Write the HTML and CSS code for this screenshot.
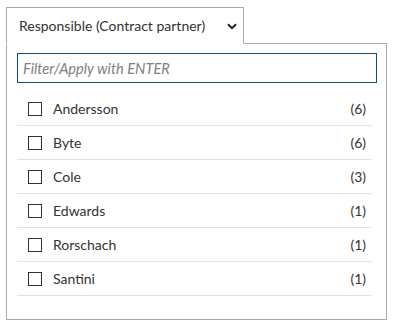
FILE: index.html
```html
<!DOCTYPE html>
<html>
<head>
<meta charset="utf-8">
<link rel="stylesheet" href="styles.css">
</head>
<body>
<div class="wrap">
  <div class="tab">
    <span class="tab-label">Responsible (Contract partner)</span>
    <svg class="chev" width="10" height="7" viewBox="0 0 10 7"><path d="M1 1.2 L5 5.2 L9 1.2" fill="none" stroke="#222" stroke-width="2"/></svg>
  </div>
  <div class="panel">
    <div class="filter"><span class="ph">Filter/Apply with ENTER</span></div>
    <ul class="list">
      <li class="row"><span class="cb"></span><span class="name">Andersson</span><span class="count">(6)</span></li>
      <li class="row"><span class="cb"></span><span class="name">Byte</span><span class="count">(6)</span></li>
      <li class="row"><span class="cb"></span><span class="name">Cole</span><span class="count">(3)</span></li>
      <li class="row"><span class="cb"></span><span class="name">Edwards</span><span class="count">(1)</span></li>
      <li class="row"><span class="cb"></span><span class="name">Rorschach</span><span class="count">(1)</span></li>
      <li class="row"><span class="cb"></span><span class="name">Santini</span><span class="count">(1)</span></li>
    </ul>
  </div>
</div>
</body>
</html>
```
FILE: styles.css
```css
html, body { margin: 0; padding: 0; background: #fff; }
body { font-family: "Lato", "Open Sans", sans-serif; color: #333; font-size: 14px; }
.wrap { padding: 7px 0 0 6px; }
.tab {
  width: 236px; height: 35px; box-sizing: content-box;
  border: 1px solid #aaa; border-bottom: 1px solid #fff;
  margin-bottom: -1px; position: relative; z-index: 1; background: #fff;
  display: flex; align-items: center;
}
.tab-label { margin-left: 12px; }
.chev { margin-left: auto; margin-right: 6px; margin-top: 1px; }
.panel {
  border: 1px solid #aaa;
  padding: 9px 0 0 10px; box-sizing: border-box; width: 381px; height: 277px;
}
.filter {
  width: 360px; height: 30px; box-sizing: border-box;
  border: 1.5px solid #0d4b80; display: flex; align-items: center; padding-left: 5px;
}
.ph { font-style: italic; color: #808080; font-size: 14.6px; }
.list { list-style: none; margin: 9px 0 0; padding: 0; width: 355px; }
.row {
  height: 34px; box-sizing: border-box; border-bottom: 1px solid #e2e2e2;
  display: flex; align-items: center; padding: 0 6px 0 11px;
}
.cb { width: 14px; height: 14px; box-sizing: border-box; border: 1.5px solid #333; margin-right: 11px; }
.name { flex: 1; }
```
